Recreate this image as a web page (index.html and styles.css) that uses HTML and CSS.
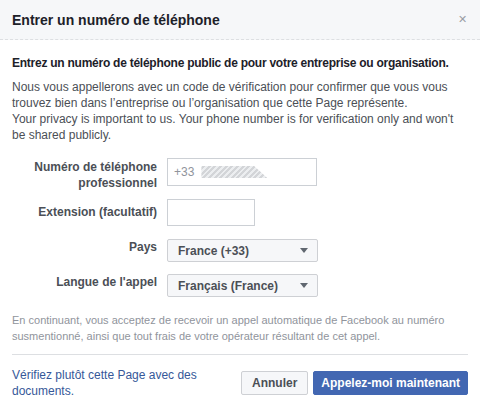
FILE: index.html
```html
<!DOCTYPE html>
<html lang="fr">
<head>
    <meta charset="UTF-8">
    <meta name="viewport" content="width=device-width, initial-scale=1.0">
    <title>Entrer un numéro de téléphone</title>
    <link rel="stylesheet" href="styles.css">
</head>
<body>
    <div class="dialog">
        <div class="dialog-header">
            <h2>Entrer un numéro de téléphone</h2>
            <span class="close">&#x2715;</span>
        </div>

        <div class="dialog-body">
            <p class="lead">Entrez un numéro de téléphone public de pour votre entreprise ou organisation.</p>
            <p class="info">Nous vous appellerons avec un code de vérification pour confirmer que vous vous trouvez bien dans l’entreprise ou l’organisation que cette Page représente.<br>Your privacy is important to us. Your phone number is for verification only and won't be shared publicly.</p>

            <div class="form">
                <div class="row row-phone">
                    <label>Numéro de téléphone professionnel</label>
                    <div class="field phone">
                        <span class="prefix">+33</span>
                        <span class="redacted"></span>
                    </div>
                </div>
                <div class="row row-ext">
                    <label>Extension (facultatif)</label>
                    <div class="field ext"></div>
                </div>
                <div class="row row-select">
                    <label>Pays</label>
                    <div class="select">France (+33)<span class="caret"></span></div>
                </div>
                <div class="row row-select">
                    <label>Langue de l'appel</label>
                    <div class="select">Français (France)<span class="caret"></span></div>
                </div>
            </div>

            <p class="legal">En continuant, vous acceptez de recevoir un appel automatique de Facebook au numéro susmentionné, ainsi que tout frais de votre opérateur résultant de cet appel.</p>
        </div>

        <div class="dialog-footer">
            <a class="alt-link" href="#">Vérifiez plutôt cette Page avec des documents.</a>
            <div class="buttons">
                <button class="btn">Annuler</button>
                <button class="btn btn-primary">Appelez-moi maintenant</button>
            </div>
        </div>
    </div>
</body>
</html>
```

FILE: styles.css
```css
body {
    margin: 0;
    font-family: "Liberation Sans", Arial, sans-serif;
    font-size: 12px;
    color: #1d2129;
    background: #fff;
}
.dialog {
    width: 480px;
    height: 411px;
    overflow: hidden;
}
.dialog-header {
    display: flex;
    justify-content: space-between;
    align-items: center;
    height: 39px;
    padding: 0 12px;
    background-color: #f6f7f9;
    border-bottom: 1px dashed #dddfe2;
}
.dialog-header h2 {
    margin: 0;
    font-size: 14px;
    font-weight: bold;
    color: #1d2129;
}
.close {
    font-size: 11px;
    color: #9a9ea6;
    margin-right: 1px;
}
.dialog-body {
    padding: 12px 12px 0;
}
.lead {
    margin: 3px 0 0;
    font-weight: bold;
    line-height: 16px;
    letter-spacing: -0.25px;
    white-space: nowrap;
}
.info {
    margin: 8px 0 0;
    line-height: 16px;
    color: #4b4f56;
}
.form {
    margin-top: 15px;
    display: flex;
    flex-direction: column;
}
.row {
    display: flex;
    align-items: flex-start;
}
label {
    width: 145px;
    flex-shrink: 0;
    margin-right: 10px;
    text-align: right;
    font-weight: bold;
    color: #4b4f56;
    line-height: 16px;
    padding-top: 1px;
}
.row-ext {
    margin-top: 8px;
}
.row-ext label {
    padding-top: 5px;
}
.row-select {
    margin-top: 13px;
}
.row-select + .row-select {
    margin-top: 12px;
}
.row-select label {
    padding-top: 0;
}
.field {
    box-sizing: border-box;
    border: 1px solid #ccd0d5;
    background: #fff;
}
.phone {
    width: 150px;
    height: 28px;
    display: flex;
    align-items: center;
    padding-left: 6px;
}
.prefix {
    color: #90949c;
}
.redacted {
    display: inline-block;
    width: 66px;
    height: 12px;
    margin-left: 7px;
    background: repeating-linear-gradient(-45deg, #d3d5d8 0 2px, #eceef0 2px 4px);
    clip-path: polygon(0 0, 80% 0, 100% 100%, 0 100%);
}
.ext {
    width: 88px;
    height: 27px;
}
.select {
    box-sizing: border-box;
    width: 151px;
    height: 23px;
    display: flex;
    align-items: center;
    justify-content: space-between;
    padding: 0 9px 0 10px;
    background-color: #f6f7f9;
    border: 1px solid #ced0d4;
    border-radius: 2px;
    font-weight: bold;
    color: #4b4f56;
}
.caret {
    width: 0;
    height: 0;
    border-left: 4px solid transparent;
    border-right: 4px solid transparent;
    border-top: 5px solid #606770;
}
.legal {
    margin: 15px 0 0;
    font-size: 11px;
    line-height: 16px;
    color: #90949c;
    padding-bottom: 10px;
    border-bottom: 1px solid #dddfe2;
}
.dialog-footer {
    display: flex;
    justify-content: space-between;
    align-items: center;
    padding: 12px 12px 0;
}
.alt-link {
    width: 210px;
    color: #365899;
    text-decoration: none;
    line-height: 16px;
}
.buttons {
    display: flex;
    gap: 5px;
}
.btn {
    height: 24px;
    padding: 0 10px;
    font-family: inherit;
    font-size: 12px;
    font-weight: bold;
    color: #4b4f56;
    background-color: #f6f7f9;
    border: 1px solid #ced0d4;
    border-radius: 2px;
}
.btn-primary {
    padding: 0 7px;
    color: #fff;
    background-color: #4267b2;
    border-color: #4267b2;
}
```
